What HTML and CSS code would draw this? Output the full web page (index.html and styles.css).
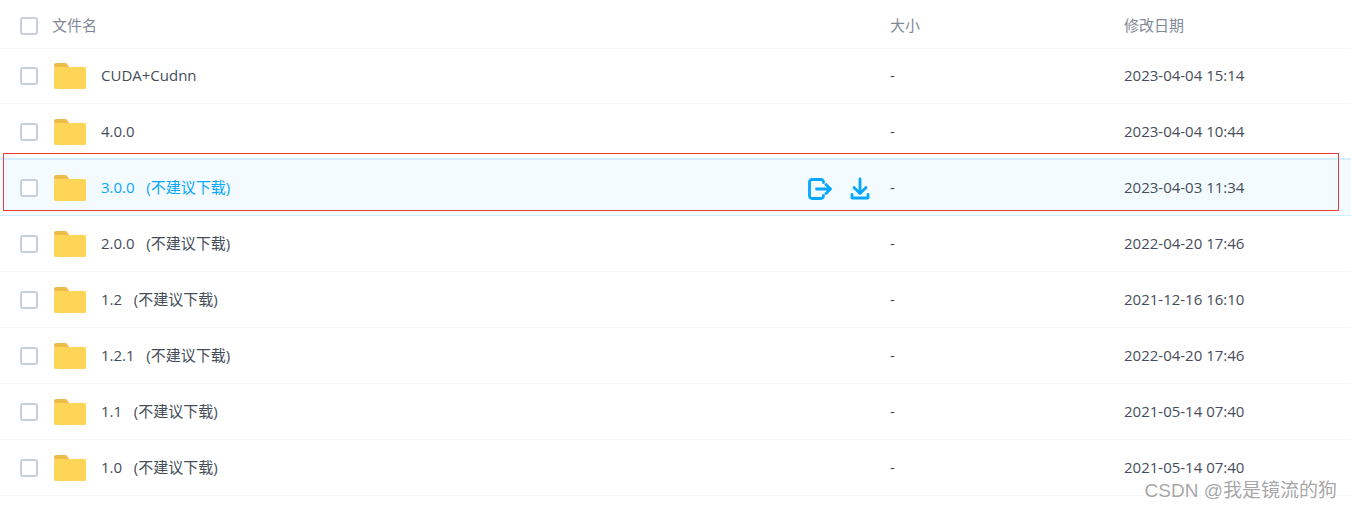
FILE: index.html
```html
<!DOCTYPE html>
<html lang="zh-CN">
<head>
    <meta charset="UTF-8">
    <meta name="viewport" content="width=device-width, initial-scale=1.0">
    <title>文件列表</title>
    <link rel="stylesheet" href="styles.css">
</head>
<body>
    <svg class="defs" width="0" height="0">
        <symbol id="folder" viewBox="0 0 32 26">
            <path d="M0 2C0 .9.9 0 2 0h8.500c1.200 0 2.200.5 3 1.400L15 4H0z" fill="#eebc4a"/>
            <rect x="0" y="4" width="32" height="22" rx="1.500" fill="#ffd558"/>
        </symbol>
    </svg>

    <div class="file-list">
        <div class="row head">
            <div class="name-col"><span class="check"></span><span>文件名</span></div>
            <div>大小</div>
            <div>修改日期</div>
        </div>
        <div class="row">
            <div class="name-col"><span class="check"></span><svg class="folder"><use href="#folder"/></svg><span class="name">CUDA+Cudnn</span></div>
            <div class="cell">-</div>
            <div class="cell">2023-04-04 15:14</div>
        </div>
        <div class="row">
            <div class="name-col"><span class="check"></span><svg class="folder"><use href="#folder"/></svg><span class="name">4.0.0</span></div>
            <div class="cell">-</div>
            <div class="cell">2023-04-04 10:44</div>
        </div>
        <div class="row active">
            <div class="name-col">
                <span class="check"></span><svg class="folder"><use href="#folder"/></svg><span class="name">3.0.0   (不建议下载)</span>
                <div class="actions">
                    <svg viewBox="0 0 24 24" width="24" height="24" fill="none" stroke="#06a7ff" stroke-width="2.800" stroke-linecap="round" stroke-linejoin="round">
                        <path d="M15.500 5.500V5a2.500 2.500 0 0 0-2.500-2.500H4A2.500 2.500 0 0 0 1.500 5v14A2.500 2.500 0 0 0 4 21.500h9a2.500 2.500 0 0 0 2.500-2.500v-.5"/>
                        <path d="M8.500 12h13.500M18 7.500l4.500 4.500-4.500 4.500"/>
                    </svg>
                    <svg viewBox="0 0 24 24" width="24" height="24" fill="none" stroke="#06a7ff" stroke-width="2.800" stroke-linecap="round" stroke-linejoin="round">
                        <path d="M12 2v14M6 10.500l6 6 6-6"/>
                        <path d="M4 17.500v3.500h16v-3.500"/>
                    </svg>
                </div>
            </div>
            <div class="cell">-</div>
            <div class="cell">2023-04-03 11:34</div>
        </div>
        <div class="row">
            <div class="name-col"><span class="check"></span><svg class="folder"><use href="#folder"/></svg><span class="name">2.0.0   (不建议下载)</span></div>
            <div class="cell">-</div>
            <div class="cell">2022-04-20 17:46</div>
        </div>
        <div class="row">
            <div class="name-col"><span class="check"></span><svg class="folder"><use href="#folder"/></svg><span class="name">1.2   (不建议下载)</span></div>
            <div class="cell">-</div>
            <div class="cell">2021-12-16 16:10</div>
        </div>
        <div class="row">
            <div class="name-col"><span class="check"></span><svg class="folder"><use href="#folder"/></svg><span class="name">1.2.1   (不建议下载)</span></div>
            <div class="cell">-</div>
            <div class="cell">2022-04-20 17:46</div>
        </div>
        <div class="row">
            <div class="name-col"><span class="check"></span><svg class="folder"><use href="#folder"/></svg><span class="name">1.1   (不建议下载)</span></div>
            <div class="cell">-</div>
            <div class="cell">2021-05-14 07:40</div>
        </div>
        <div class="row">
            <div class="name-col"><span class="check"></span><svg class="folder"><use href="#folder"/></svg><span class="name">1.0   (不建议下载)</span></div>
            <div class="cell">-</div>
            <div class="cell">2021-05-14 07:40</div>
        </div>
    </div>

    <div class="red-box"></div>
    <div class="watermark">CSDN @我是镜流的狗</div>
</body>
</html>
```

FILE: styles.css
```css
body {
    margin: 0;
    height: 510px;
    overflow: hidden;
    position: relative;
    background-color: white;
    font-family: "Open Sans", "Noto Sans CJK SC", sans-serif;
    font-size: 15px;
    color: #454d5a;
}
.defs {
    position: absolute;
}
.row {
    display: grid;
    grid-template-columns: 890px 234px 1fr;
    align-items: center;
    height: 55px;
    border-bottom: 1px solid #f5f6f7;
}
.head {
    height: 48px;
    margin-bottom: -1px;
    color: #818999;
}
.head .check {
    margin-top: 3px;
}
.name-col {
    display: flex;
    align-items: center;
    padding-left: 20px;
    position: relative;
}
.name {
    white-space: pre;
    margin-bottom: 2px;
}
.cell {
    margin-bottom: 2px;
}
.check {
    width: 14px;
    height: 14px;
    border: 2px solid #c9d0dc;
    border-radius: 3px;
    background-color: white;
    margin-right: 14px;
    flex-shrink: 0;
}
.folder {
    width: 32px;
    height: 26px;
    margin: 1px 15px 0 2px;
    flex-shrink: 0;
}
.active {
    background-color: #f3fbff;
    border-bottom-color: #d0ecff;
    box-shadow: 0 -2px 0 #d5eeff;
}
.active .name {
    color: #06a7ff;
}
.actions {
    position: absolute;
    right: 18px;
    top: 50%;
    margin-top: 1px;
    transform: translateY(-50%);
    display: flex;
    gap: 16px;
}
.red-box {
    position: absolute;
    left: 3px;
    top: 153px;
    width: 1334px;
    height: 56px;
    border: 1px solid #f03c3c;
}
.watermark {
    position: absolute;
    right: 14px;
    top: 475px;
    font-family: "Liberation Sans", "Noto Sans CJK SC", sans-serif;
    font-size: 19px;
    color: rgba(90, 90, 90, 0.55);
}
```
